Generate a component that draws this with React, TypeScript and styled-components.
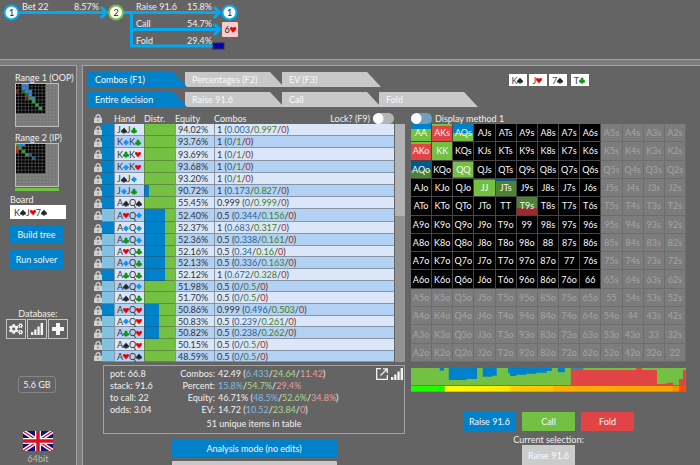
import React from 'react';
import styled, { createGlobalStyle } from 'styled-components';
import { FaCogs } from 'react-icons/fa';

const color = {
  page: '#7c7c7c',
  panel: '#646464',
  line: '#a3a3a3',
  text: '#f0f0f0',
  blue: '#0082cb',
  green: '#74c043',
  red: '#e04444',
  wire: '#00aaf2',
};

const GlobalStyle = createGlobalStyle`
  * { box-sizing: border-box; }
  body {
    margin: 0;
    background: ${color.page};
    color: ${color.text};
    font: 9px/11px Lato, "Open Sans", sans-serif;
  }
  button, input { font: inherit; color: inherit; margin: 0; }
`;

/* ---------- suits and icons ---------- */

type Suit = 's' | 'h' | 'd' | 'c';

const suitColor: Record<Suit, string> = { s: '#262626', h: '#f00000', d: '#1592f5', c: '#0a960a' };
const suitName: Record<Suit, string> = { s: 'spades', h: 'hearts', d: 'diamonds', c: 'clubs' };

const SuitSvg = styled.svg`
  display: block;
  flex: none;
  width: 6px;
  height: 7px;
`;

function SuitIcon({ suit }: { suit: Suit }) {
  return (
    <SuitSvg viewBox="0 0 12 14" preserveAspectRatio="none" fill={suitColor[suit]} role="img" aria-label={suitName[suit]}>
      {suit === 's' && <path d="M6 1C7 4 12 6 12 9.2c0 2.6-3.4 3.3-5 1.4L8.5 13h-5L5 10.600C3.400 12.500 0 11.800 0 9.200 0 6 5 4 6 1z" />}
      {suit === 'h' && <path d="M6 13C5 10.500 0 8 0 4.600 0 1.500 4.600.8 6 3.800 7.400.8 12 1.500 12 4.600 12 8 7 10.500 6 13z" />}
      {suit === 'd' && <path d="M6 1l6 6-6 6-6-6z" />}
      {suit === 'c' && (
        <>
          <circle cx="6" cy="4" r="3" />
          <circle cx="3" cy="8.500" r="3" />
          <circle cx="9" cy="8.500" r="3" />
          <path d="M5 6h2l1.500 7h-5z" />
        </>
      )}
    </SuitSvg>
  );
}

const CardRun = styled.span`
  display: flex;
  align-items: center;
`;

function Cards({ cards }: { cards: string }) {
  const pairs = cards.match(/../g) ?? [];
  return (
    <CardRun>
      {pairs.map((card) => (
        <React.Fragment key={card}>
          {card[0]}
          <SuitIcon suit={card[1] as Suit} />
        </React.Fragment>
      ))}
    </CardRun>
  );
}

const LockSvg = styled.svg`
  display: block;
  width: 8px;
  height: 9px;
  margin-left: 2px;
`;

function LockIcon() {
  return (
    <LockSvg viewBox="0 0 16 18">
      <path d="M4 9V5.500a4 4 0 0 1 8 0V9" fill="none" stroke="#d0d0d0" strokeWidth="2.600" />
      <rect x="0" y="7.500" width="16" height="10.500" rx="1" fill="#d0d0d0" />
      <rect x="7" y="11" width="2" height="4" fill="#777" />
    </LockSvg>
  );
}

function BarsIcon({ size }: { size: number }) {
  return (
    <svg width={size} height={size} viewBox="0 0 12 12" fill="#f4f4f4">
      <rect x="0" y="9" width="2.300" height="3" />
      <rect x="3.200" y="6.500" width="2.300" height="5.500" />
      <rect x="6.400" y="3.500" width="2.300" height="8.500" />
      <rect x="9.600" y="0" width="2.400" height="12" />
    </svg>
  );
}

function PopOutIcon() {
  return (
    <svg width="12" height="12" viewBox="0 0 12 12" fill="none" stroke="#f4f4f4" strokeWidth="1.300">
      <path d="M5 .7H.7v10.600h10.600V7" />
      <path d="M4.500 7.500L10.800 1.200M7 .8h4.300v4.300" />
    </svg>
  );
}

/* ---------- frame ---------- */

const Shell = styled.div`
  display: flex;
  flex-direction: column;
  gap: 5px;
  height: 100vh;
  overflow: hidden;
`;

const TreeBar = styled.header`
  flex: none;
  height: 60px;
  background: ${color.panel};
  border-bottom: 1px solid ${color.line};
`;

const Panels = styled.div`
  flex: 1;
  min-height: 0;
  display: flex;
  gap: 5px;
`;

const Sidebar = styled.aside`
  flex: none;
  width: 77px;
  padding: 6px 10px 0;
  background: ${color.panel};
  border: solid ${color.line};
  border-width: 1px 1px 0 0;
  overflow: hidden;
`;

const Main = styled.main`
  flex: 1;
  min-width: 0;
  padding: 6px 14px 0 5px;
  background: ${color.panel};
  border: solid ${color.line};
  border-width: 1px 0 0 1px;
  overflow: hidden;
`;

/* ---------- decision tree ---------- */

const TreeSvg = styled.svg`
  display: block;
  fill: ${color.text};
`;

function DecisionTree() {
  return (
    <TreeSvg width="260" height="58" role="img" aria-label="Decision tree">
      <g stroke={color.wire} strokeWidth="3" fill="none">
        <path d="M18 12.500H107M122 12.500H219M131.500 12.500V46H213M132 29.500H219" />
        <path d="M101 7l5.500 5.500-5.500 5.500M214 7l5.500 5.500-5.500 5.500M214 24l5.500 5.500-5.500 5.500" />
      </g>
      <g fill="#fff" strokeWidth="2">
        <circle cx="11.500" cy="12.500" r="7" stroke={color.wire} />
        <circle cx="116" cy="12.500" r="7" stroke={color.green} />
        <circle cx="229.500" cy="12.500" r="7" stroke={color.wire} />
      </g>
      <rect x="222" y="22" width="16" height="15" rx="1" fill="#fccaca" />
      <rect x="213" y="43" width="11" height="6" fill="#0000b8" stroke="#333" strokeWidth="1" />
      <g fill="#222" textAnchor="middle">
        <text x="11.500" y="16">1</text>
        <text x="116" y="16">2</text>
        <text x="229.500" y="16">1</text>
        <text x="227" y="33">6</text>
      </g>
      <path transform="translate(230 26) scale(.52)" fill="#f00000" d="M6 13C5 10.500 0 8 0 4.600 0 1.500 4.600.8 6 3.800 7.400.8 12 1.500 12 4.600 12 8 7 10.500 6 13z" />
      <text x="22" y="10">Bet 22</text>
      <text x="136" y="10">Raise 91.6</text>
      <text x="136" y="27">Call</text>
      <text x="136" y="44">Fold</text>
      <g textAnchor="end">
        <text x="99" y="10">8.57%</text>
        <text x="212" y="10">15.8%</text>
        <text x="212" y="27">54.7%</text>
        <text x="212" y="44">29.4%</text>
      </g>
    </TreeSvg>
  );
}

/* ---------- sidebar ---------- */

const RangeBlock = styled.section`
  margin: 0 0 5px 5px;
  white-space: nowrap;
  &:nth-of-type(2) { margin-bottom: 3px; }
`;

const RangeSvg = styled.svg`
  display: block;
  width: 44px;
  height: 44px;
`;

const RangeUsed = styled.div`
  width: 44px;
  height: 3px;
  margin-top: 1px;
  background: ${color.green};
`;

type Dot = [number, number, string];

function RangeThumb({ dots }: { dots: Dot[] }) {
  const ticks = Array.from({ length: 12 }, (_, i) => i + 1);
  return (
    <RangeSvg viewBox="0 0 13 13">
      <rect width="13" height="13" fill="#828282" />
      <rect width="9" height="9" fill="#000" />
      {dots.map(([x, y, fill]) => (
        <rect key={`${x}-${y}`} x={x} y={y} width="1" height="1" fill={fill} />
      ))}
      {ticks.map((t) => (
        <path key={t} d={`M${t} 0V13M0 ${t}H13`} stroke="#707070" strokeWidth=".15" />
      ))}
      <rect x=".15" y=".15" width="12.700" height="12.700" fill="none" stroke="#bdbdbd" strokeWidth=".3" />
    </RangeSvg>
  );
}

const B = '#2a8ae6';
const G = '#22b038';
const R = '#c01818';
const rangeOop: Dot[] = [
  [2, 0, B], [3, 0, B], [2, 1, B], [3, 1, B], [0, 2, '#8a1010'], [2, 2, '#107020'], [3, 2, B], [4, 2, B],
  [3, 3, '#107020'], [4, 3, B], [3, 4, '#8a1010'], [4, 4, G], [5, 4, B], [5, 5, G], [6, 6, G], [7, 7, G],
];
const rangeIp: Dot[] = [
  [0, 0, G], [1, 0, B], [2, 0, B], [0, 1, '#f02020'], [1, 1, G], [0, 2, R], [2, 2, G], [3, 3, G], [4, 3, '#1c5e98'], [5, 4, '#1c5e98'],
];

const Board = styled.div`
  display: flex;
  align-items: center;
  height: 14px;
  padding-left: 4px;
  margin-bottom: 6px;
  background: #fff;
  color: #333;
`;

const ActionButton = styled.button<{ $tone?: string }>`
  height: 19px;
  width: 53px;
  padding: 0;
  border: 0;
  border-radius: 1px;
  background: ${(p) => p.$tone ?? color.blue};
  color: #f6f6f6;
  white-space: nowrap;
`;

const SideActions = styled.div`
  display: grid;
  gap: 6px;
`;

const Database = styled.div`
  margin: 39px -4px 37px;
  text-align: center;
`;

const IconRow = styled.div`
  display: flex;
  gap: 1px;
`;

const SquareButton = styled.button`
  display: grid;
  place-items: center;
  width: 20px;
  height: 20px;
  padding: 0;
  border: 1px solid #c4c4c4;
  background: none;
  color: #f4f4f4;
`;

const Memory = styled.div`
  width: 38px;
  margin: 0 auto 38px 8px;
  padding: 2px 0;
  border: 1px solid #858585;
  border-radius: 3px;
  text-align: center;
`;

const Build = styled.div`
  display: grid;
  justify-items: center;
  gap: 2px;
  color: #bdbdbd;
`;

function Flag() {
  return (
    <svg width="30" height="20" viewBox="0 0 60 40">
      <rect width="60" height="40" fill="#10107a" />
      <path d="M0 0l60 40M60 0L0 40" stroke="#fff" strokeWidth="8" />
      <path d="M0 0l60 40M60 0L0 40" stroke="#d81020" strokeWidth="2.600" />
      <path d="M30 0v40M0 20h60" stroke="#fff" strokeWidth="12" />
      <path d="M30 0v40M0 20h60" stroke="#d81020" strokeWidth="7" />
    </svg>
  );
}

/* ---------- tabs and board cards ---------- */

const Columns = styled.div`
  display: grid;
  grid-template-columns: minmax(0, 317fr) minmax(0, 275fr);
  column-gap: 6px;
`;

const TabRow = styled.div`
  display: flex;
  margin-bottom: 5px;
`;

const Tab = styled.button<{ $active?: boolean }>`
  position: relative;
  z-index: ${(p) => (p.$active ? 1 : 0)};
  flex: none;
  width: 99px;
  height: 15px;
  padding: 0 0 0 7px;
  border: 0;
  background: ${(p) => (p.$active ? color.blue : '#c8c8c8')};
  color: #f8f8f8;
  clip-path: polygon(0 0, calc(100% - 14px) 0, 100% 100%, 0 100%);
  text-align: left;
  line-height: 13px;
  white-space: nowrap;
  & + & { margin-left: -2px; }
`;

const BoardCards = styled.div`
  display: flex;
  justify-content: center;
  align-items: end;
  gap: 2px;
`;

const PlayingCard = styled.span<{ $gap?: boolean }>`
  display: grid;
  place-items: center;
  width: 18px;
  height: 12px;
  margin-left: ${(p) => (p.$gap ? 2 : 0)}px;
  margin-bottom: 6px;
  background: #fff;
  color: #444;
`;

/* ---------- combos table ---------- */

const Left = styled.div`
  padding-left: 4px;
`;

const TableArea = styled.div`
  display: flex;
  gap: 1px;
`;

const Table = styled.table`
  flex: 1;
  width: 100%;
  table-layout: fixed;
  border-collapse: collapse;
  white-space: nowrap;
  color: #333;

  th {
    height: 12px;
    padding: 0;
    text-align: left;
    font-weight: 400;
    line-height: 11px;
    color: ${color.text};
  }
`;

const Row = styled.tr`
  height: 12px;
  &:nth-child(-n + 10):nth-child(5n + 3) { height: 13px; }
  &:nth-child(n + 11):nth-child(3n + 2) { height: 11px; }
  &:nth-child(odd) { --stripe: #dbe7f8; }
  &:nth-child(even) { --stripe: #b3d1f2; }
`;

const Cell = styled.td`
  padding: 0 0 0 3px;
  background: var(--stripe);
  box-shadow: inset 1px -1px #8794a3;
  line-height: 10px;
  overflow: hidden;
`;

const LockCell = styled.td`
  padding: 0;
`;

const WeightCell = styled.td<{ $full: boolean }>`
  padding: 0;
  background: ${(p) => (p.$full ? color.blue : '#83c1e3')};
  box-shadow: inset 0 -1px rgba(60, 60, 60, 0.4);
`;

const DistCell = styled.td<{ $raise: number }>`
  padding: 0;
  background: linear-gradient(90deg, ${color.blue} ${(p) => p.$raise}%, ${color.green} ${(p) => p.$raise}%);
  box-shadow: inset 1px -1px rgba(60, 60, 60, 0.4);
`;

const LockHead = styled.span`
  display: flex;
  justify-content: space-between;
  align-items: center;
`;

const SwitchLabel = styled.label`
  display: flex;
  align-items: center;
  gap: 3px;
`;

const Switch = styled.input<{ $track: string }>`
  appearance: none;
  width: 21px;
  height: 11px;
  border-radius: 6px;
  background: radial-gradient(circle at 5px 50%, #fff 5px, transparent 6px), ${(p) => p.$track};
`;

const ScrollTrack = styled.div`
  width: 10px;
  margin-top: 12px;
  background: #929292;
`;

const ScrollThumb = styled.div`
  height: 92px;
  background: #b2b2b2;
`;

const Part = styled.span<{ $c: string }>`
  color: ${(p) => p.$c};
`;

const onLight = ['#1f6498', '#437d22', '#a02c2c'];
const onDark = ['#7dbbe4', '#a9d88c', '#ea9c9c'];

function Split({ parts, tones }: { parts: string[]; tones: string[] }) {
  return (
    <>
      {parts.map((part, i) => (
        <React.Fragment key={i}>
          {i > 0 && '/'}
          <Part $c={tones[i]}>{part}</Part>
        </React.Fragment>
      ))}
    </>
  );
}

const combos: [string, string, string, string, string][] = [
  ['JsJc', '94.02', '1', '0.003', '0.997'],
  ['KdKc', '93.76', '1', '0', '1'],
  ['KcKh', '93.69', '1', '0', '1'],
  ['KdKh', '93.68', '1', '0', '1'],
  ['JsJd', '93.20', '1', '0', '1'],
  ['JdJc', '90.72', '1', '0.173', '0.827'],
  ['AsQs', '55.45', '0.999', '0', '0.999'],
  ['AhQd', '52.40', '0.5', '0.344', '0.156'],
  ['AdQd', '52.37', '1', '0.683', '0.317'],
  ['AcQd', '52.36', '0.5', '0.338', '0.161'],
  ['AhQc', '52.16', '0.5', '0.34', '0.16'],
  ['AdQc', '52.13', '0.5', '0.336', '0.163'],
  ['AcQc', '52.12', '1', '0.672', '0.328'],
  ['AsQd', '51.98', '0.5', '0', '0.5'],
  ['AsQc', '51.70', '0.5', '0', '0.5'],
  ['AhQh', '50.86', '0.999', '0.496', '0.503'],
  ['AdQh', '50.83', '0.5', '0.239', '0.261'],
  ['AcQh', '50.82', '0.5', '0.238', '0.262'],
  ['AsQh', '50.15', '0.5', '0', '0.5'],
  ['AhQs', '48.59', '0.5', '0', '0.5'],
];

function CombosTable() {
  return (
    <TableArea>
      <Table>
        <colgroup>
          <col width="10" />
          <col width="12" />
          <col width="30" />
          <col width="31" />
          <col width="39" />
          <col />
        </colgroup>
        <thead>
          <tr>
            <th><LockIcon /></th>
            <th />
            <th>Hand</th>
            <th>Distr.</th>
            <th>Equity</th>
            <th>
              <LockHead>
                Combos
                <SwitchLabel>
                  Lock? (F9)
                  <Switch type="checkbox" $track="#b5b5b5" />
                </SwitchLabel>
              </LockHead>
            </th>
          </tr>
        </thead>
        <tbody>
          {combos.map(([hand, equity, weight, raise, call]) => (
            <Row key={hand}>
              <LockCell><LockIcon /></LockCell>
              <WeightCell $full={Number(weight) > 0.9} />
              <Cell><Cards cards={hand} /></Cell>
              <DistCell $raise={Math.round((Number(raise) / Number(weight)) * 100)} />
              <Cell>{equity}%</Cell>
              <Cell>
                {weight} (<Split parts={[raise, call, '0']} tones={onLight} />)
              </Cell>
            </Row>
          ))}
        </tbody>
      </Table>
      <ScrollTrack><ScrollThumb /></ScrollTrack>
    </TableArea>
  );
}

/* ---------- summary ---------- */

const Summary = styled.section`
  position: relative;
  margin: 3px 0 5px 11px;
  padding: 2px 6px 3px;
  border: 1px solid ${color.line};
  line-height: 12px;
  white-space: nowrap;
`;

const SummaryGrid = styled.div`
  display: grid;
  grid-template-columns: 44px 58px 1fr;
  column-gap: 3px;
`;

const StatLabel = styled.div`
  text-align: right;
`;

const SummaryNote = styled.div`
  margin-top: 2px;
  text-align: center;
`;

const SummaryTools = styled.div`
  position: absolute;
  top: 2px;
  right: 1px;
  display: flex;
  gap: 3px;
`;

const ToolButton = styled.button`
  display: block;
  padding: 0;
  border: 0;
  background: none;
  line-height: 0;
`;

const ModeWrap = styled.div`
  padding-left: 11px;
`;

const ModeActions = styled.div`
  display: grid;
  gap: 3px;
  width: 165px;
  margin: 0 auto;
`;

const ModeButton = styled(ActionButton)`
  width: 100%;
`;

const stats: [string, string, React.ReactNode][] = [
  ['pot: 66.8', 'Combos:', <>42.49 (<Split parts={['6.433', '24.64', '11.42']} tones={onDark} />)</>],
  ['stack: 91.6', 'Percent:', <Split parts={['15.8%', '54.7%', '29.4%']} tones={onDark} />],
  ['to call: 22', 'Equity:', <>46.71% (<Split parts={['48.5%', '52.6%', '34.8%']} tones={onDark} />)</>],
  ['odds: 3.04', 'EV:', <>14.72 (<Split parts={['10.52', '23.84', '0']} tones={onDark} />)</>],
];

/* ---------- hand matrix ---------- */

const MatrixHead = styled.div`
  display: flex;
  align-items: center;
  height: 12px;
`;

const Matrix = styled.div`
  display: grid;
  grid-template-columns: repeat(13, minmax(0, 1fr));
  grid-auto-rows: 1fr;
  height: 238px;
`;

const HandCell = styled.div<{ $off: boolean; $fill?: string }>`
  display: grid;
  place-items: center;
  border: solid ${(p) => (p.$off ? '#6e6e6e' : '#454545')};
  border-width: 0 1px 1px 0;
  background: ${(p) => p.$fill ?? (p.$off ? '#7c7c7c' : '#000')};
  color: ${(p) => (p.$off ? '#a4a4a4' : '#fafafa')};
`;

const stack = (...stops: [string, number][]) => {
  let from = 0;
  const out = stops.map(([c, to]) => {
    const piece = `${c} ${from}% ${to}%`;
    from = to;
    return piece;
  });
  return `linear-gradient(${out.join(', ')}) border-box`;
};

const fills: Record<string, string> = {
  AA: stack([color.blue, 30], [color.green, 100]),
  AKs: stack([color.green, 13], [color.red, 100]),
  AQs: stack([color.blue, 50], [color.green, 100]),
  AKo: stack([color.green, 11], [color.red, 100]),
  KK: color.green,
  AQo: stack(['#005a8e', 50], ['#4b8430', 100]),
  QQ: stack([color.blue, 8], [color.green, 90], [color.red, 100]),
  JJ: stack([color.blue, 7], [color.green, 100]),
  JTs: stack(['#005a8e', 12], ['#4b8430', 100]),
  T9s: stack(['#4b8430', 56], ['#9c2c2c', 100]),
};

const ranks = 'AKQJT98765432'.split('');

function HandMatrix() {
  return (
    <Matrix>
      {ranks.flatMap((row, r) =>
        ranks.map((col, c) => {
          const hand = r === c ? row + col : r < c ? `${row}${col}s` : `${col}${row}o`;
          return (
            <HandCell key={hand} $off={r > 8 || c > 8} $fill={fills[hand]}>
              {hand}
            </HandCell>
          );
        }),
      )}
    </Matrix>
  );
}

/* ---------- range chart ---------- */

const ChartSvg = styled.svg`
  display: block;
  width: 100%;
  height: 24px;
  margin: 6px 0 20px;
`;

function RangeChart() {
  return (
    <ChartSvg viewBox="0 0 824 72" preserveAspectRatio="none">
      <defs>
        <linearGradient id="heat">
          <stop offset="0" stopColor="#fdfd00" />
          <stop offset=".28" stopColor="#ffe800" />
          <stop offset=".29" stopColor="#ffcf00" />
          <stop offset=".47" stopColor="#ffc400" />
          <stop offset=".48" stopColor="#ffb000" />
          <stop offset="1" stopColor="#ffa400" />
        </linearGradient>
      </defs>
      <rect width="824" height="52" fill={color.green} />
      <path
        fill={color.blue}
        d="M86 0h13v8H86zM113 0h85v33h-32v3h-53zM215 0h42v23h-14v3h-28zM291 0h131v9h-16v5h-30v3h-30v3h-30v4h-19v-8h-6zM440 0h21v13h-21z"
      />
      <path
        fill={color.red}
        d="M479 2h37v4h158V0h18v6h45v42h17v-1h14v-3h17v7h18V33h12V6h9v46H479z"
      />
      <rect x="480" width="36" height="2" fill={color.blue} />
      <rect y="54" width="101" height="17" fill="#20fc00" />
      <rect x="101" y="54" width="685" height="17" fill="url(#heat)" />
      <rect x="786" y="54" width="17" height="17" fill="#ff8c00" />
      <rect x="803" y="54" width="21" height="17" fill="#ff4e00" />
    </ChartSvg>
  );
}

const Decisions = styled.div`
  display: flex;
  justify-content: center;
  gap: 6px;
`;

const Selection = styled.div`
  display: grid;
  justify-items: center;
  margin-top: 3px;
`;

const SelectionValue = styled.div`
  display: grid;
  place-items: center;
  width: 53px;
  height: 20px;
  background: #cbcbcb;
  color: #fafafa;
`;

export default function App() {
  return (
    <>
      <GlobalStyle />
      <Shell>
        <TreeBar><DecisionTree /></TreeBar>
        <Panels>
          <Sidebar>
            <RangeBlock>
              Range 1 (OOP)
              <RangeThumb dots={rangeOop} />
            </RangeBlock>
            <RangeBlock>
              Range 2 (IP)
              <RangeThumb dots={rangeIp} />
              <RangeUsed />
            </RangeBlock>
            <div>Board</div>
            <Board><Cards cards="KsJh7s" /></Board>
            <SideActions>
              <ActionButton>Build tree</ActionButton>
              <ActionButton>Run solver</ActionButton>
            </SideActions>
            <Database>
              Database:
              <IconRow>
                <SquareButton aria-label="Settings"><FaCogs size={14} /></SquareButton>
                <SquareButton aria-label="Statistics"><BarsIcon size={12} /></SquareButton>
                <SquareButton aria-label="Add">
                  <svg width="12" height="12" viewBox="0 0 12 12"><path d="M6 0v12M0 6h12" stroke="#f4f4f4" strokeWidth="4" /></svg>
                </SquareButton>
              </IconRow>
            </Database>
            <Memory>5.6 GB</Memory>
            <Build>
              <Flag />
              64bit
            </Build>
          </Sidebar>
          <Main>
            <Columns>
              <TabRow>
                <Tab $active>Combos (F1)</Tab>
                <Tab>Percentages (F2)</Tab>
                <Tab>EV (F3)</Tab>
              </TabRow>
              <BoardCards>
                <PlayingCard><Cards cards="Ks" /></PlayingCard>
                <PlayingCard><Cards cards="Jh" /></PlayingCard>
                <PlayingCard><Cards cards="7s" /></PlayingCard>
                <PlayingCard $gap><Cards cards="Tc" /></PlayingCard>
              </BoardCards>
            </Columns>
            <TabRow>
              <Tab $active>Entire decision</Tab>
              <Tab>Raise 91.6</Tab>
              <Tab>Call</Tab>
              <Tab>Fold</Tab>
            </TabRow>
            <Columns>
              <Left>
                <CombosTable />
                <Summary>
                  <SummaryGrid>
                    {stats.map(([fact, label, value]) => (
                      <React.Fragment key={label}>
                        <div>{fact}</div>
                        <StatLabel>{label}</StatLabel>
                        <div>{value}</div>
                      </React.Fragment>
                    ))}
                  </SummaryGrid>
                  <SummaryNote>51 unique items in table</SummaryNote>
                  <SummaryTools>
                    <ToolButton aria-label="Open in window"><PopOutIcon /></ToolButton>
                    <ToolButton aria-label="Chart"><BarsIcon size={12} /></ToolButton>
                  </SummaryTools>
                </Summary>
                <ModeWrap>
                  <ModeActions>
                    <ModeButton>Analysis mode (no edits)</ModeButton>
                    <ModeButton $tone="#c8c8c8" aria-label="Edit mode" />
                  </ModeActions>
                </ModeWrap>
              </Left>
              <div>
                <MatrixHead>
                  <SwitchLabel>
                    <Switch type="checkbox" $track="#6f9fbf" />
                    Display method 1
                  </SwitchLabel>
                </MatrixHead>
                <HandMatrix />
                <RangeChart />
                <Decisions>
                  <ActionButton>Raise 91.6</ActionButton>
                  <ActionButton $tone={color.green}>Call</ActionButton>
                  <ActionButton $tone={color.red}>Fold</ActionButton>
                </Decisions>
                <Selection>
                  <div>Current selection:</div>
                  <SelectionValue>Raise 91.6</SelectionValue>
                </Selection>
              </div>
            </Columns>
          </Main>
        </Panels>
      </Shell>
    </>
  );
}
